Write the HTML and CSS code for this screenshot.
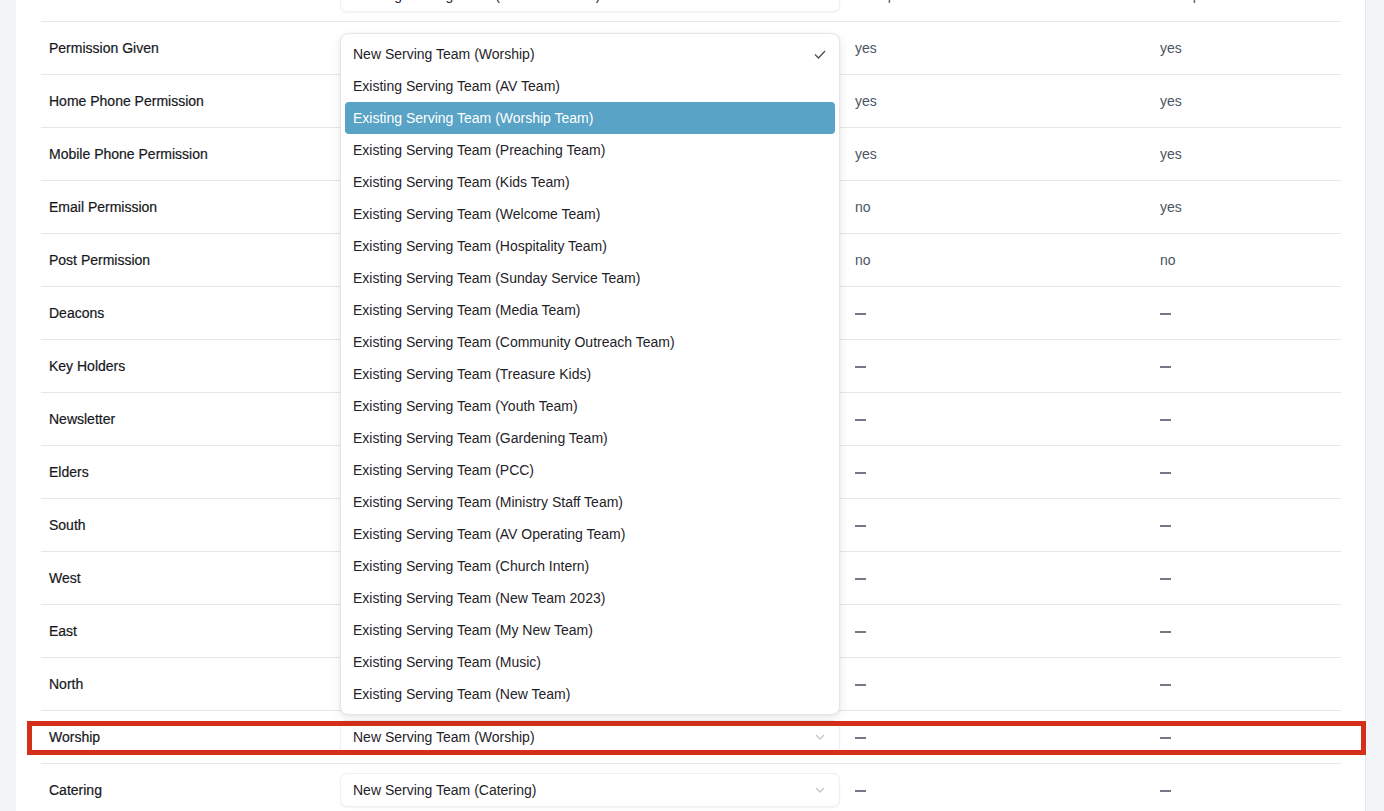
FILE: index.html
```html
<!DOCTYPE html>
<html lang="en">
<head>
<meta charset="utf-8">
<title>Serving Teams</title>
<link rel="stylesheet" href="styles.css">
</head>
<body>
<div class="page">
  <div class="card">
    <div class="table">
      <div class="row">
        <div class="label">Services</div>
        <div class="cell-select"><div class="select"><span>Existing Serving Team (Welcome Team)</span><svg class="chev" viewBox="0 0 10 6"><path d="M1 1l4 4 4-4"/></svg></div></div>
        <div class="val">Not specified</div>
        <div class="val">Not specified</div>
      </div>
      <div class="row"><div class="label">Permission Given</div><div class="cell-select"></div><div class="val">yes</div><div class="val">yes</div></div>
      <div class="row"><div class="label">Home Phone Permission</div><div class="cell-select"></div><div class="val">yes</div><div class="val">yes</div></div>
      <div class="row"><div class="label">Mobile Phone Permission</div><div class="cell-select"></div><div class="val">yes</div><div class="val">yes</div></div>
      <div class="row"><div class="label">Email Permission</div><div class="cell-select"></div><div class="val">no</div><div class="val">yes</div></div>
      <div class="row"><div class="label">Post Permission</div><div class="cell-select"></div><div class="val">no</div><div class="val">no</div></div>
      <div class="row"><div class="label">Deacons</div><div class="cell-select"></div><div class="val"><span class="dash"></span></div><div class="val"><span class="dash"></span></div></div>
      <div class="row"><div class="label">Key Holders</div><div class="cell-select"></div><div class="val"><span class="dash"></span></div><div class="val"><span class="dash"></span></div></div>
      <div class="row"><div class="label">Newsletter</div><div class="cell-select"></div><div class="val"><span class="dash"></span></div><div class="val"><span class="dash"></span></div></div>
      <div class="row"><div class="label">Elders</div><div class="cell-select"></div><div class="val"><span class="dash"></span></div><div class="val"><span class="dash"></span></div></div>
      <div class="row"><div class="label">South</div><div class="cell-select"></div><div class="val"><span class="dash"></span></div><div class="val"><span class="dash"></span></div></div>
      <div class="row"><div class="label">West</div><div class="cell-select"></div><div class="val"><span class="dash"></span></div><div class="val"><span class="dash"></span></div></div>
      <div class="row"><div class="label">East</div><div class="cell-select"></div><div class="val"><span class="dash"></span></div><div class="val"><span class="dash"></span></div></div>
      <div class="row"><div class="label">North</div><div class="cell-select"></div><div class="val"><span class="dash"></span></div><div class="val"><span class="dash"></span></div></div>
      <div class="row row-active">
        <div class="label">Worship</div>
        <div class="cell-select">
          <div class="select"><span>New Serving Team (Worship)</span><svg class="chev" viewBox="0 0 10 6"><path d="M1 1l4 4 4-4"/></svg></div>
          <div class="menu">
            <div class="opt opt-selected"><span>New Serving Team (Worship)</span><svg class="check" viewBox="0 0 12 9"><path d="M1 4.5l3.5 3.5L11 1"/></svg></div>
            <div class="opt">Existing Serving Team (AV Team)</div>
            <div class="opt opt-hover">Existing Serving Team (Worship Team)</div>
            <div class="opt">Existing Serving Team (Preaching Team)</div>
            <div class="opt">Existing Serving Team (Kids Team)</div>
            <div class="opt">Existing Serving Team (Welcome Team)</div>
            <div class="opt">Existing Serving Team (Hospitality Team)</div>
            <div class="opt">Existing Serving Team (Sunday Service Team)</div>
            <div class="opt">Existing Serving Team (Media Team)</div>
            <div class="opt">Existing Serving Team (Community Outreach Team)</div>
            <div class="opt">Existing Serving Team (Treasure Kids)</div>
            <div class="opt">Existing Serving Team (Youth Team)</div>
            <div class="opt">Existing Serving Team (Gardening Team)</div>
            <div class="opt">Existing Serving Team (PCC)</div>
            <div class="opt">Existing Serving Team (Ministry Staff Team)</div>
            <div class="opt">Existing Serving Team (AV Operating Team)</div>
            <div class="opt">Existing Serving Team (Church Intern)</div>
            <div class="opt">Existing Serving Team (New Team 2023)</div>
            <div class="opt">Existing Serving Team (My New Team)</div>
            <div class="opt">Existing Serving Team (Music)</div>
            <div class="opt">Existing Serving Team (New Team)</div>
          </div>
        </div>
        <div class="val"><span class="dash"></span></div>
        <div class="val"><span class="dash"></span></div>
        <div class="highlight"></div>
      </div>
      <div class="row">
        <div class="label">Catering</div>
        <div class="cell-select"><div class="select"><span>New Serving Team (Catering)</span><svg class="chev" viewBox="0 0 10 6"><path d="M1 1l4 4 4-4"/></svg></div></div>
        <div class="val"><span class="dash"></span></div>
        <div class="val"><span class="dash"></span></div>
      </div>
    </div>
  </div>
</div>
</body>
</html>
```
FILE: styles.css
```css
* { box-sizing: border-box; }
html, body {
  margin: 0;
  height: 100%;
  overflow: hidden;
}
body {
  background: #f3f4f8;
  font-family: "Liberation Sans", Arial, Helvetica, sans-serif;
  font-size: 14px;
  color: #1f2328;
}
.page {
  padding: 0 18px 0 16px;
  height: 100%;
}
.card {
  display: flow-root;
  background: #ffffff;
  border-right: 1px solid #e6e7ec;
  height: 100%;
  padding: 0 24px 0 25px;
}
.table {
  margin-top: -31px;
}
.row {
  display: grid;
  grid-template-columns: 299px 500px 305px 1fr;
  align-items: center;
  height: 53px;
  border-bottom: 1px solid #e5e7eb;
}
.label {
  padding-left: 8px;
  color: #16181d;
  -webkit-text-stroke: 0.2px #16181d;
}
.cell-select {
  position: relative;
  height: 34px;
}
.select {
  height: 34px;
  border: 1px solid #eef0f3;
  border-radius: 7px;
  box-shadow: 0 1px 2px rgba(16, 24, 40, 0.05);
  padding: 0 14px 0 12px;
  display: flex;
  align-items: center;
  justify-content: space-between;
  color: #1f2328;
  background: #fff;
}
.chev {
  width: 10px;
  height: 6px;
  fill: none;
  stroke: #c3c7ce;
  stroke-width: 1.3;
}
.val {
  padding-left: 15px;
  color: #4b5563;
}
.dash {
  display: inline-block;
  width: 11px;
  height: 2px;
  background: #737987;
  vertical-align: middle;
}
.menu {
  position: absolute;
  z-index: 10;
  left: 0;
  bottom: 39px;
  width: 500px;
  background: #fff;
  border: 1px solid #e4e6ea;
  border-radius: 8px;
  padding: 4px;
  box-shadow: 0 4px 12px rgba(16, 24, 40, 0.08), 0 1px 3px rgba(16, 24, 40, 0.06);
}
.opt {
  height: 32px;
  display: flex;
  align-items: center;
  justify-content: space-between;
  padding: 0 9px 0 8px;
  border-radius: 4px;
  color: #1f2328;
}
.opt-hover {
  background: #58a3c6;
  color: #ffffff;
}
.check {
  width: 12px;
  height: 9px;
  fill: none;
  stroke: #4a4f57;
  stroke-width: 1.3;
}
.row-active {
  position: relative;
}
.highlight {
  position: absolute;
  left: -14px;
  right: -25px;
  top: 10px;
  height: 34px;
  border: 5px solid #d42f1a;
  pointer-events: none;
}
```
